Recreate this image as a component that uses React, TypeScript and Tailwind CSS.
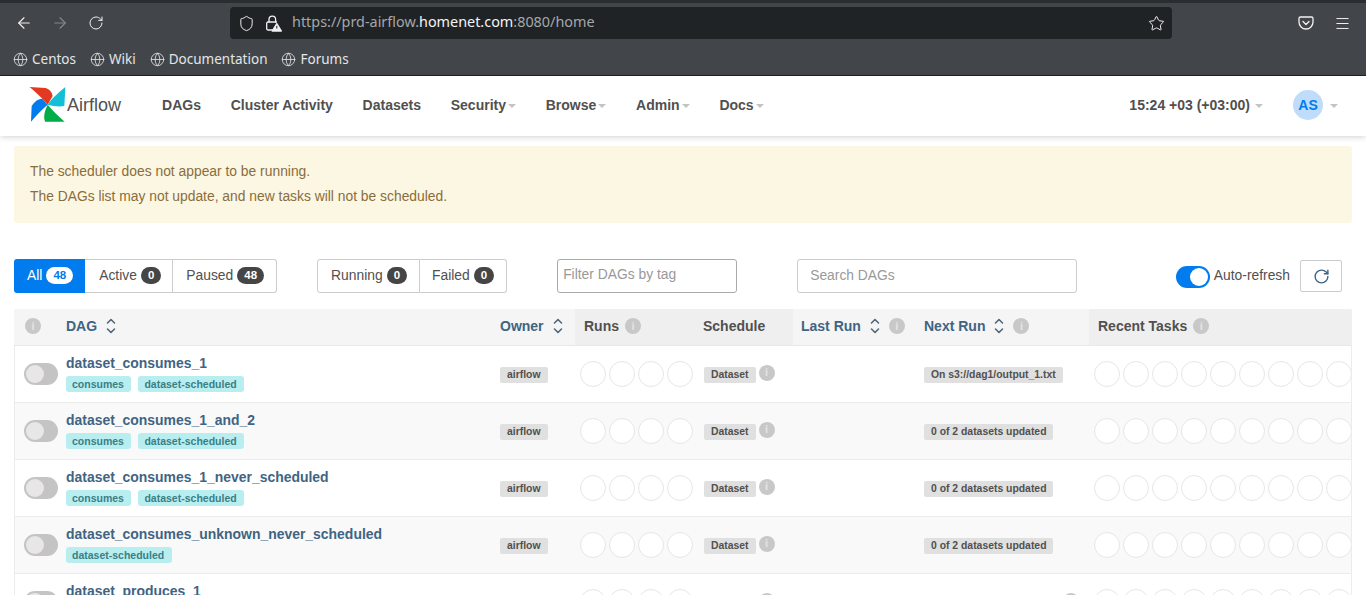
import { ArrowLeft, ArrowRight, Globe, Menu, RotateCw, Shield, Star } from "lucide-react";

const bookmarks = ["Centos", "Wiki", "Documentation", "Forums"];

const rows = [
  { name: "dataset_consumes_1", tags: ["consumes", "dataset-scheduled"], next: "On s3://dag1/output_1.txt" },
  { name: "dataset_consumes_1_and_2", tags: ["consumes", "dataset-scheduled"], next: "0 of 2 datasets updated" },
  { name: "dataset_consumes_1_never_scheduled", tags: ["consumes", "dataset-scheduled"], next: "0 of 2 datasets updated" },
  { name: "dataset_consumes_unknown_never_scheduled", tags: ["dataset-scheduled"], next: "0 of 2 datasets updated" },
  { name: "dataset_produces_1", tags: ["dataset-scheduled"], next: "On s3://dag1/output_1.txt", nextInfo: true },
];

const headCols = "grid grid-cols-[43px_434px_84px_119px_99px_122px_174px_263px]";
const rowCols = "grid grid-cols-[42px_434px_84px_119px_99px_122px_174px_262px]";

const Caret = ({ className = "" }: { className?: string }) => (
  <span className={`inline-block border-x-[4px] border-t-[4px] border-x-transparent border-t-[#c4c4c4] ${className}`} />
);

const Info = ({ className = "" }: { className?: string }) => (
  <span className={`inline-flex h-4 w-4 shrink-0 items-center justify-center rounded-full bg-[#c8c8c8] text-[11px] font-bold leading-none text-[#e4e4e4] ${className}`}>
    i
  </span>
);

const Sort = () => (
  <svg width="10" height="16" viewBox="0 0 10 16" fill="none" stroke="#51677c" strokeWidth="1.6" strokeLinecap="round" strokeLinejoin="round" className="ml-[9px]">
    <path d="M1.5 5 5 1.5 8.500 5" />
    <path d="M1.500 11 5 14.500 8.500 11" />
  </svg>
);

const Circles = ({ count }: { count: number }) => (
  <div className="flex gap-[3px]">
    {Array.from({ length: count }).map((_, i) => (
      <span key={i} className="h-[26px] w-[26px] shrink-0 rounded-full border border-[#e6e6e6] bg-white" />
    ))}
  </div>
);

const Label = ({ text }: { text: string }) => (
  <span className="inline-block rounded-[2px] bg-[#e0e0e0] px-[7px] py-[2px] text-[10.4px] font-bold leading-[12px] text-[#51504f]">
    {text}
  </span>
);

const Tag = ({ text }: { text: string }) => (
  <span className="inline-block rounded-[3px] bg-[#b9eef0] pb-[2px] pl-[6px] pr-[7.5px] pt-[2px] text-[10.5px] font-bold leading-[12px] text-[#3a7f86]">
    {text}
  </span>
);

const Count = ({ n }: { n: number }) => (
  <span className="ml-[4px] inline-block rounded-full bg-[#454545] px-[7px] py-[2px] text-[11.5px] font-bold leading-[13px] text-white">
    {n}
  </span>
);

const Logo = () => (
  <svg width="45" height="45" viewBox="0 0 135 135" className="-ml-[3px] -mt-[3px] shrink-0">
    <path d="M14 15 L62 18 Q80 24 83 42 L68 68 Q50 46 14 15Z" fill="#e43921" />
    <path d="M121 15 L118 72 Q95 76 68 68 Q78 50 121 15Z" fill="#11bfd6" />
    <path d="M119 119 L60 119 Q52 100 68 68 Q88 92 119 119Z" fill="#00ad46" />
    <path d="M18 119 L20 72 Q34 50 52 50 L68 68 Q44 88 18 119Z" fill="#017cee" />
  </svg>
);

const Pocket = () => (
  <svg width="16" height="16" viewBox="0 0 16 16" fill="none" stroke="#f1f1f1" strokeWidth="1.3" strokeLinecap="round" strokeLinejoin="round">
    <path d="M2.500 2h11A1.500 1.500 0 0 1 15 3.500v3.500a7 7 0 0 1-14 0V3.500A1.500 1.500 0 0 1 2.500 2Z" />
    <path d="M5 6.500l3 3 3-3" />
  </svg>
);

const InsecureLock = () => (
  <svg width="17" height="17" viewBox="0 0 17 17" fill="none" stroke="#f0f0f0" strokeWidth="1.3" strokeLinecap="round" strokeLinejoin="round">
    <path d="M4 7V4.500a3.300 3.300 0 0 1 6.600 0V7" />
    <path d="M7.500 15H3a1.300 1.300 0 0 1-1.300-1.300V8.300A1.300 1.300 0 0 1 3 7h8.500" />
    <path d="M11.800 8.500 16.400 16H7.200Z" fill="#f0f0f0" />
    <path d="M11.800 11.200v2" stroke="#1f2326" strokeWidth="1" />
  </svg>
);

const navItems = [
  { label: "DAGs", caret: false },
  { label: "Cluster Activity", caret: false },
  { label: "Datasets", caret: false },
  { label: "Security", caret: true },
  { label: "Browse", caret: true },
  { label: "Admin", caret: true },
  { label: "Docs", caret: true },
];

const App = () => {
  return (
    <div className="h-[595px] overflow-hidden bg-white font-['Liberation_Sans',sans-serif] text-[13.85px] text-[#51504f]">
      {/* browser chrome */}
      <div className="h-[76px] border-b border-t-[3px] border-b-[#1f2224] border-t-[#2b2e31] bg-[#42464a] font-['Noto_Sans',sans-serif] text-[#e8e8e8]">
        <div className="flex h-[40px] items-center">
          <div className="flex w-[230px] items-center pl-[15px]">
            <ArrowLeft size={18} strokeWidth={1.5} className="text-[#f0f0f0]" />
            <ArrowRight size={18} strokeWidth={1.5} className="ml-[18px] text-[#83878a]" />
            <RotateCw size={16} strokeWidth={1.5} className="ml-[19px] text-[#f0f0f0]" />
          </div>
          <div className="flex h-[32px] w-[942px] items-center rounded-[4px] bg-[#1f2326] pl-[8px] pr-[7px]">
            <Shield size={17} strokeWidth={1.4} className="text-[#f0f0f0]" />
            <span className="ml-[10px]">
              <InsecureLock />
            </span>
            <span className="-mt-[2px] ml-[10px] text-[14.4px] text-[#a5a7a9]">
              https://prd-airflow.<span className="text-[#f4f4f4]">homenet.com</span>:8080/home
            </span>
            <Star size={17} strokeWidth={1.4} className="ml-auto text-[#f0f0f0]" />
          </div>
          <div className="flex flex-1 items-center justify-end gap-[20px] pr-[15px]">
            <Pocket />
            <Menu size={17} strokeWidth={1.4} className="text-[#f0f0f0]" />
          </div>
        </div>
        <div className="mt-[1px] flex h-[31px] items-center gap-[14px] pl-[13px]">
          {bookmarks.map((b) => (
            <span key={b} className="flex items-center gap-[4px] text-[13.5px] text-[#e4e5e6]">
              <Globe size={15} strokeWidth={1.3} />
              {b}
            </span>
          ))}
        </div>
      </div>

      {/* navbar */}
      <div className="flex h-[60px] items-center bg-white pl-[28px] pr-[28px] shadow-[0_1px_6px_rgba(0,0,0,0.18)]">
        <Logo />
        <span className="-ml-[3px] -mt-[2px] text-[18px] text-[#51504f]">Airflow</span>
        <nav className="-mt-[2px] ml-[41px] flex items-center gap-[29.75px]">
          {navItems.map((n) => (
            <span key={n.label} className="flex items-center text-[14px] font-bold">
              {n.label}
              {n.caret && <Caret className="ml-[2px] mt-[2px]" />}
            </span>
          ))}
        </nav>
        <div className="-mt-[2px] ml-auto flex items-center text-[14px] font-bold">
          15:24 +03 (+03:00)
          <Caret className="ml-[5px] mt-[2px]" />
          <span className="ml-[30px] flex h-[30px] w-[30px] items-center justify-center rounded-full bg-[#bfdcfa] text-[14px] text-[#017cee]">
            AS
          </span>
          <Caret className="ml-[7px] mt-[2px]" />
        </div>
      </div>

      {/* scheduler alert */}
      <div className="mx-[14px] mt-[10px] h-[77px] rounded-[3px] bg-[#fcf7e3] px-[16px] pt-[13px] leading-[25px] text-[#8a6d3b]">
        <p>The scheduler does not appear to be running.</p>
        <p>The DAGs list may not update, and new tasks will not be scheduled.</p>
      </div>

      {/* filters */}
      <div className="mx-[14px] mt-[36px] flex h-[34px] items-center">
        <div className="flex h-full items-center">
          <span className="flex h-full items-center rounded-l-[3px] bg-[#017cee] pb-[2px] pl-[13px] pr-[12px] text-white">
            All
            <span className="ml-[4px] rounded-full bg-white px-[7px] py-[2px] text-[11.5px] font-bold leading-[13px] text-[#017cee]">48</span>
          </span>
          <span className="flex h-full items-center border-y border-r border-[#ccc] pb-[2px] pl-[14px] pr-[11px]">
            Active<Count n={0} />
          </span>
          <span className="flex h-full items-center rounded-r-[3px] border-y border-r border-[#ccc] pb-[2px] pl-[13px] pr-[12px]">
            Paused<Count n={48} />
          </span>
        </div>
        <div className="ml-[40px] flex h-full items-center">
          <span className="flex h-full items-center rounded-l-[3px] border border-[#ccc] pb-[2px] pl-[13px] pr-[12px]">
            Running<Count n={0} />
          </span>
          <span className="flex h-full items-center rounded-r-[3px] border-y border-r border-[#ccc] pb-[2px] pl-[12px] pr-[12px]">
            Failed<Count n={0} />
          </span>
        </div>
        <div className="ml-[50px] flex h-full w-[180px] items-center rounded-[3px] border border-[#aaa] pb-[4px] pl-[5px] text-[#999]">
          Filter DAGs by tag
        </div>
        <div className="ml-[60px] flex h-full w-[280px] items-center rounded-[3px] border border-[#ccc] pb-[2px] pl-[12px] text-[#999]">
          Search DAGs
        </div>
        <div className="ml-auto mr-[10px] flex items-center">
          <span className="mt-[2px] flex h-[22px] w-[34px] items-center justify-end rounded-full bg-[#017cee] pr-[2px]">
            <span className="h-[18px] w-[18px] rounded-full bg-white" />
          </span>
          <span className="-mt-[2px] ml-[4px]">Auto-refresh</span>
          <span className="ml-[10px] flex h-[32px] w-[42px] items-center justify-center rounded-[2px] border border-[#ccc] text-[#3f6484]">
            <RotateCw size={17} strokeWidth={2} />
          </span>
        </div>
      </div>

      {/* dag table */}
      <div className="mx-[14px] mt-[16px] w-[1338px] rounded-t-[3px]">
        <div className={`${headCols} h-[37px] items-center border-b border-[#e8e8e8] bg-[#f5f5f5] text-[14px] font-bold`}>
          <div className="flex h-full items-center justify-center pb-[2px] pr-[5px]">
            <Info />
          </div>
          <div className="-mt-[2px] flex items-center pl-[9px] text-[#3f6484]">
            DAG<Sort />
          </div>
          <div className="-mt-[2px] flex items-center pl-[9px] text-[#3f6484]">
            Owner<Sort />
          </div>
          <div className="flex h-full items-center bg-[#efefef] pb-[2px] pl-[9px]">
            Runs<Info className="ml-[6px]" />
          </div>
          <div className="flex h-full items-center bg-[#efefef] pb-[2px] pl-[9px]">Schedule</div>
          <div className="-mt-[2px] flex items-center pl-[8px] text-[#3f6484]">
            Last Run<Sort /><Info className="ml-[9px]" />
          </div>
          <div className="-mt-[2px] flex items-center pl-[9px] text-[#3f6484]">
            Next Run<Sort /><Info className="ml-[9px]" />
          </div>
          <div className="flex h-full items-center rounded-tr-[3px] bg-[#efefef] pb-[2px] pl-[9px]">
            Recent Tasks<Info className="ml-[6px]" />
          </div>
        </div>
        {rows.map((r, i) => (
          <div
            key={r.name}
            className={`${rowCols} h-[57px] items-center border-x border-b border-[#ececec] ${i % 2 === 1 ? "bg-[#f9f9f9]" : "bg-white"}`}
          >
            <div className="flex">
              <span className="ml-[9px] flex h-[22px] w-[34px] shrink-0 items-center rounded-full bg-[#c4c4c4] pl-[2px]">
                <span className="h-[18px] w-[18px] rounded-full bg-[#e8e6e6]" />
              </span>
            </div>
            <div className="-mt-[2px] flex h-full flex-col justify-center pl-[9px]">
              <a className="text-[13.95px] font-bold leading-[16px] text-[#3f6484]">{r.name}</a>
              <div className="mt-[5px] flex gap-[7px]">
                {r.tags.map((t) => (
                  <Tag key={t} text={t} />
                ))}
              </div>
            </div>
            <div className="mt-[2px] flex pl-[9px]">
              <Label text="airflow" />
            </div>
            <div className="pl-[5px]">
              <Circles count={4} />
            </div>
            <div className="mt-[2px] flex items-center pl-[10px]">
              <Label text="Dataset" />
              <Info className="mb-[5px] ml-[3px]" />
            </div>
            <div />
            <div className="mt-[2px] flex items-center pl-[9px]">
              <Label text={r.next} />
              {r.nextInfo && <Info className="mb-[5px]" />}
            </div>
            <div className="overflow-hidden pl-[5px]">
              <Circles count={9} />
            </div>
          </div>
        ))}
      </div>
    </div>
  );
};

export default App;
